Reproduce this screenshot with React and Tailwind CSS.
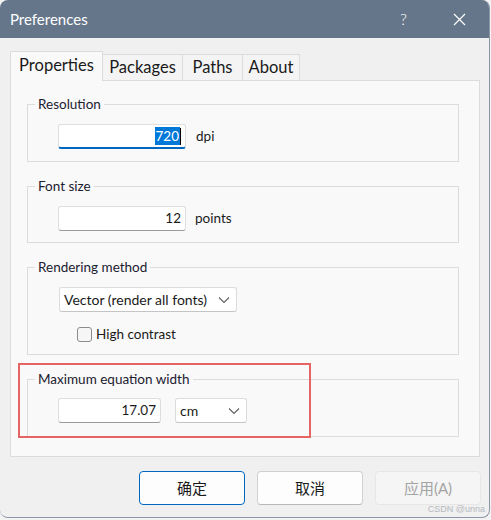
import React from 'react'

const font = { fontFamily: 'Lato, "Noto Sans CJK SC", sans-serif' }

const Chevron = () => (
  <svg width="12" height="8" viewBox="0 0 12 8" className="text-[#5f5f5f] shrink-0">
    <polyline points="1,1.5 6,6.5 11,1.5" fill="none" stroke="currentColor" strokeWidth="1.1" />
  </svg>
)

const Group = ({ title, className = '', children }) => (
  <fieldset className={`border border-[#dcdcdc] ml-[16px] mr-[20px] ${className}`}>
    <legend className="ml-[7px] px-[3px] text-[13.5px] leading-[20px] text-[#1b2030]">{title}</legend>
    {children}
  </fieldset>
)

const Field = ({ value, width, focused }) => (
  <div
    className={`h-[25px] bg-white rounded-[3px] border border-[#dedede] flex items-center justify-end pr-[4px] text-[13.5px] text-[#1a1a1a] ${
      focused ? 'border-b-2 border-b-[#0067c0]' : 'border-b-[#9a9a9a]'
    } ${width}`}
  >
    {focused ? (
      <>
        <span className="bg-[#0078d7] text-white leading-[18px] px-[1px]">{value}</span>
        <span className="w-px h-[17px] bg-black" />
      </>
    ) : (
      value
    )}
  </div>
)

const Select = ({ value, width }) => (
  <div
    className={`h-[25px] bg-white rounded-[3px] border border-[#dcdcdc] border-b-[#c4c4c4] flex items-center justify-between pl-[4px] pr-[6px] text-[14px] text-[#1a1a1a] whitespace-nowrap ${width}`}
  >
    <span>{value}</span>
    <Chevron />
  </div>
)

const Tab = ({ label, active, width }) => (
  <div
    className={`${width} border border-[#dcdcdc] flex items-center justify-center text-[16.5px] text-[#1a1a1a] ${
      active
        ? 'h-[30px] bg-[#f9f9f9] border-b-0 -mb-px relative z-10 pb-[3px]'
        : 'h-[26px] bg-[#f4f4f4] border-b-0 -ml-px'
    }`}
  >
    {label}
  </div>
)

const Button = ({ label, variant }) => {
  const styles = {
    primary: 'bg-[#fdfdfd] border-[#0067c0] text-[#1a1a1a]',
    normal: 'bg-[#fdfdfd] border-[#d0d0d0] border-b-[#b8b8b8] text-[#1a1a1a]',
    disabled: 'bg-[#f5f5f5] border-[#e6e6e6] text-[#a3a3a3]',
  }
  return (
    <button className={`w-[106px] h-[34px] rounded-[4px] border text-[15px] ${styles[variant]}`}>{label}</button>
  )
}

export default function App() {
  return (
    <div className="w-[491px] h-[520px] bg-[#f3f3f3]" style={font}>
      <div className="relative w-[490px] h-[518px] rounded-[8px] overflow-hidden bg-[#f0f0f0] border-r border-b border-[#8d96a6] flex flex-col">
        {/* title bar */}
        <div className="h-[38px] bg-[#66768a] flex items-center text-white shrink-0">
          <span className="ml-[10px] text-[15px]">Preferences</span>
          <span className="ml-auto mr-[46px] text-[16px] font-light">?</span>
          <svg width="13" height="13" viewBox="0 0 13 13" className="mr-[23px]">
            <path d="M1 1 L12 12 M12 1 L1 12" stroke="white" strokeWidth="1.2" />
          </svg>
        </div>

        {/* tabs */}
        <div className="flex items-end ml-[10px] mt-[13px]">
          <Tab label="Properties" active width="w-[93px]" />
          <Tab label="Packages" width="w-[81px]" />
          <Tab label="Paths" width="w-[61px]" />
          <Tab label="About" width="w-[58px]" />
        </div>

        {/* panel */}
        <div className="mx-[10px] w-[470px] h-[377px] border border-[#dcdcdc] bg-[#f9f9f9] pt-[13px] flex flex-col gap-[14px]">
          <Group title="Resolution" className="h-[68px]">
            <div className="flex items-center gap-[10px] ml-[30px] mt-[10px]">
              <Field value="720" width="w-[128px]" focused />
              <span className="text-[13.5px] text-[#1a1a1a]">dpi</span>
            </div>
          </Group>
          <Group title="Font size" className="h-[67px]">
            <div className="flex items-center gap-[9px] ml-[30px] mt-[10px]">
              <Field value="12" width="w-[128px]" />
              <span className="text-[13.5px] text-[#1a1a1a]">points</span>
            </div>
          </Group>
          <Group title="Rendering method" className="h-[98px]">
            <div className="ml-[31px] mt-[10px]">
              <Select value="Vector (render all fonts)" width="w-[178px]" />
            </div>
            <div className="flex items-center gap-[4px] ml-[49px] mt-[12px] text-[13.5px] text-[#1a1a1a]">
              <span className="w-[15px] h-[15px] rounded-[3px] border border-[#8c8c8c] bg-[#f6f6f6]" />
              <span>High contrast</span>
            </div>
          </Group>
          <Group title="Maximum equation width" className="h-[68px]">
            <div className="flex items-center gap-[14px] ml-[30px] mt-[9px]">
              <Field value="17.07" width="w-[103px]" />
              <Select value="cm" width="w-[72px]" />
            </div>
          </Group>
        </div>

        {/* buttons */}
        <div className="flex justify-end gap-[12px] mr-[8px] mt-[14px]">
          <Button label="确定" variant="primary" />
          <Button label="取消" variant="normal" />
          <Button label="应用(A)" variant="disabled" />
        </div>

        {/* red annotation box */}
        <div className="absolute left-[18px] top-[363px] w-[293px] h-[75px] border-2 border-[#e56565] pointer-events-none" />

        <span className="absolute right-[4px] bottom-[1px] text-[9px] text-[#b5b9c0]" style={{ fontFamily: '"Liberation Sans", sans-serif' }}>
          CSDN @unna
        </span>
      </div>
    </div>
  )
}
